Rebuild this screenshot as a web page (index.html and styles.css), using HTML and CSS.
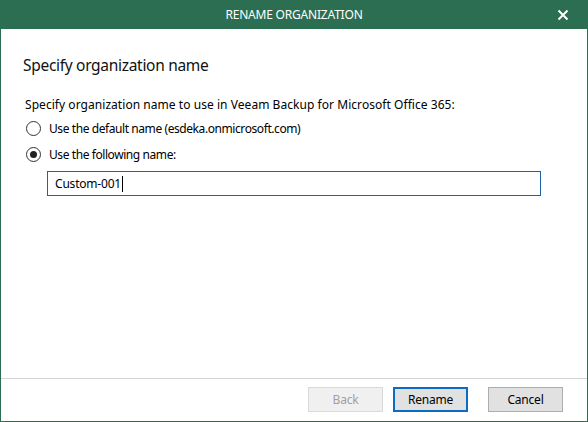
FILE: index.html
```html
<!DOCTYPE html>
<html lang="en">
<head>
  <meta charset="UTF-8">
  <title>Rename Organization</title>
  <link rel="stylesheet" href="styles.css">
</head>
<body>
  <div class="window">
    <div class="titlebar">
      <span class="title">RENAME ORGANIZATION</span>
      <span class="close">
        <svg width="12" height="12" viewBox="0 0 12 12"><path d="M1.5 1.5 L10.5 10.5 M10.5 1.5 L1.5 10.5" stroke="#fff" stroke-width="2" fill="none"/></svg>
      </span>
    </div>
    <div class="content">
      <h2>Specify organization name</h2>
      <p class="label">Specify organization name to use in Veeam Backup for Microsoft Office 365:</p>
      <label class="radio first"><span class="dot"></span>Use the default name (esdeka.onmicrosoft.com)</label>
      <label class="radio checked"><span class="dot"></span>Use the following name:</label>
      <div class="input">Custom-001<span class="caret"></span></div>
    </div>
    <div class="footer">
      <button class="btn disabled">Back</button>
      <button class="btn primary">Rename</button>
      <button class="btn cancel">Cancel</button>
    </div>
  </div>
</body>
</html>
```

FILE: styles.css
```css
html, body {
  margin: 0;
  padding: 0;
  background: #fff;
}

body {
  font-family: "Noto Sans", "Open Sans", sans-serif;
  font-size: 12px;
  color: #000;
}

.window {
  width: 588px;
  height: 422px;
  box-sizing: border-box;
  border: 1px solid #2b6e51;
  border-top: none;
  display: flex;
  flex-direction: column;
}

.titlebar {
  height: 29px;
  margin: 0 -1px;
  background: #2b6e51;
  color: #fff;
  display: flex;
  align-items: center;
  justify-content: center;
  position: relative;
}

.title {
  font-size: 12px;
  letter-spacing: -0.2px;
}

.close {
  position: absolute;
  right: 19px;
  top: 9px;
  width: 12px;
  height: 12px;
}

.close svg {
  display: block;
}

.content {
  flex: 1;
  padding: 0 0 0 22px;
}

h2 {
  font-weight: normal;
  font-size: 15.5px;
  margin: 26px 0 0 0;
  line-height: 20px;
  letter-spacing: -0.3px;
  color: #111;
}

.label {
  margin: 22px 0 0 2px;
  line-height: 16px;
  letter-spacing: 0.05px;
}

.radio {
  display: flex;
  align-items: center;
  height: 26px;
  margin-left: 3px;
  letter-spacing: -0.42px;
}

.radio.first {
  margin-top: 2px;
}

.radio .dot {
  width: 15px;
  height: 15px;
  box-sizing: border-box;
  border: 1px solid #333;
  border-radius: 50%;
  margin-right: 8px;
  display: flex;
  align-items: center;
  justify-content: center;
}

.radio.checked .dot::after {
  content: "";
  width: 7px;
  height: 7px;
  border-radius: 50%;
  background: #222;
}

.input {
  margin: 4px 0 0 24px;
  width: 494px;
  height: 25px;
  box-sizing: border-box;
  border: 1px solid #1a64a8;
  padding-left: 7px;
  display: flex;
  align-items: center;
  letter-spacing: -0.2px;
}

.caret {
  width: 1px;
  height: 16px;
  background: #000;
  margin-left: 1px;
}

.footer {
  border-top: 1px solid #d4d4d4;
  display: flex;
  align-items: flex-start;
  justify-content: flex-end;
  padding: 8px 24px 0 0;
  box-sizing: border-box;
  height: 43px;
  gap: 10px;
}

.btn {
  width: 75px;
  height: 25px;
  font-family: inherit;
  font-size: 12px;
  border: 1px solid #adadad;
  background: #e1e1e1;
  color: #000;
  padding: 0;
  letter-spacing: -0.2px;
}

.btn.disabled {
  background: #f0f0f0;
  border-color: #d9d9d9;
  color: #a0a0a0;
}

.btn.primary {
  border: 2px solid #0b6cc4;
}

.btn.cancel {
  margin-left: 10px;
}
```
